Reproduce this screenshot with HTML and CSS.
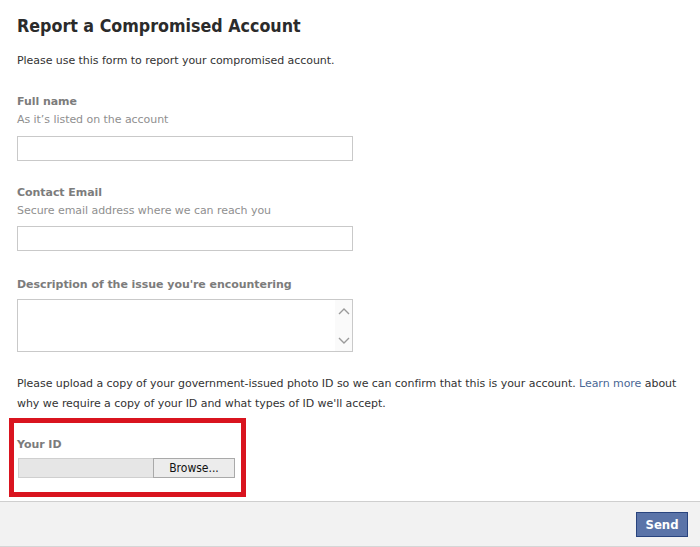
FILE: index.html
```html
<!DOCTYPE html>
<html lang="en">
<head>
  <meta charset="UTF-8">
  <title>Report a Compromised Account</title>
  <link rel="stylesheet" href="styles.css">
</head>
<body>
  <div class="page">
    <h2 class="title">Report a Compromised Account</h2>
    <p class="intro">Please use this form to report your compromised account.</p>

    <div class="field">
      <div class="label">Full name</div>
      <div class="hint">As it’s listed on the account</div>
      <input class="text-input" type="text">
    </div>

    <div class="field">
      <div class="label">Contact Email</div>
      <div class="hint">Secure email address where we can reach you</div>
      <input class="text-input" type="text">
    </div>

    <div class="field field-desc">
      <div class="label">Description of the issue you're encountering</div>
      <div class="textarea">
        <textarea></textarea>
        <div class="scroll">
          <svg width="12" height="8" viewBox="0 0 12 8"><path d="M1 7 L6 2 L11 7" fill="none" stroke="#9a9a9a" stroke-width="1.4"/></svg>
          <svg width="12" height="8" viewBox="0 0 12 8"><path d="M1 1 L6 6 L11 1" fill="none" stroke="#9a9a9a" stroke-width="1.4"/></svg>
        </div>
      </div>
    </div>

    <p class="upload-note">Please upload a copy of your government-issued photo ID so we can confirm that this is your account. <a href="#">Learn more</a> about why we require a copy of your ID and what types of ID we'll accept.</p>

    <div class="id-box">
      <div class="label">Your ID</div>
      <div class="file-input">
        <div class="file-name"></div>
        <div class="browse">Browse...</div>
      </div>
    </div>
  </div>

  <div class="footer">
    <button class="send">Send</button>
  </div>
</body>
</html>
```

FILE: styles.css
```css
body {
  margin: 0;
  font-family: "DejaVu Sans", sans-serif;
  font-size: 11px;
  letter-spacing: -0.05px;
  color: #333;
  background: #fff;
}

.page {
  padding: 14px 17px 4px 17px;
}

.title {
  margin: 0;
  font-family: "DejaVu Sans Condensed", "DejaVu Sans", sans-serif;
  font-stretch: condensed;
  font-size: 17.7px;
  line-height: 24px;
  font-weight: bold;
  letter-spacing: 0;
  color: #2b2b2b;
}

.intro {
  margin: 15px 0 0 0;
  line-height: 16px;
}

.field {
  margin-top: 23px;
}

.field + .field {
  margin-top: 22px;
}

.field + .field-desc {
  margin-top: 24px;
}

.label {
  font-weight: bold;
  color: #7c7c7c;
  line-height: 19px;
}

.hint {
  color: #8f8f8f;
  line-height: 18px;
}

.text-input {
  display: block;
  box-sizing: border-box;
  width: 336px;
  height: 25px;
  margin-top: 6px;
  border: 1px solid #c9c9c9;
  background: #fff;
  outline: none;
}

.field:first-of-type .text-input {
  margin-top: 7px;
}

.textarea {
  display: flex;
  box-sizing: border-box;
  width: 336px;
  height: 53px;
  margin-top: 5px;
  border: 1px solid #c9c9c9;
}

.textarea textarea {
  flex: 1;
  border: none;
  resize: none;
  outline: none;
}

.scroll {
  width: 17px;
  display: flex;
  flex-direction: column;
  justify-content: space-between;
  align-items: center;
  padding: 7px 0 6px 0;
  background: #fafafa;
}

.scroll svg {
  display: block;
}

.upload-note {
  margin: 22px 0 0 0;
  line-height: 20px;
}

.upload-note a {
  color: #4a6795;
  text-decoration: none;
}

.id-box {
  width: 218px;
  margin: 4px 0 0 -8px;
  padding: 12px 6px 14px 3px;
  border: 5px solid #d9141f;
}

.id-box .label {
  line-height: 20px;
  margin-bottom: 3px;
}

.file-input {
  display: flex;
  height: 20px;
  margin-left: 1px;
}

.file-name {
  flex: 1;
  background: #e6e6e6;
  border: 1px solid #cfcfcf;
  border-right: none;
}

.browse {
  box-sizing: border-box;
  width: 82px;
  border: 1px solid #a9a9a9;
  background: #ececec;
  color: #111;
  font-family: "DejaVu Sans Condensed", "DejaVu Sans", sans-serif;
  font-stretch: condensed;
  font-size: 12px;
  letter-spacing: 0;
  line-height: 18px;
  text-align: center;
}

.footer {
  display: flex;
  justify-content: flex-end;
  padding: 10px 12px 9px 0;
  background: #f2f2f2;
  border-top: 1px solid #cfcfcf;
  border-bottom: 1px solid #d6d6d6;
}

.send {
  width: 52px;
  height: 25px;
  padding: 0;
  background: #5b74a8;
  border: 1px solid #29447e;
  color: #fff;
  font-family: "DejaVu Sans Condensed", "DejaVu Sans", sans-serif;
  font-stretch: condensed;
  font-size: 13px;
  font-weight: bold;
}
```
